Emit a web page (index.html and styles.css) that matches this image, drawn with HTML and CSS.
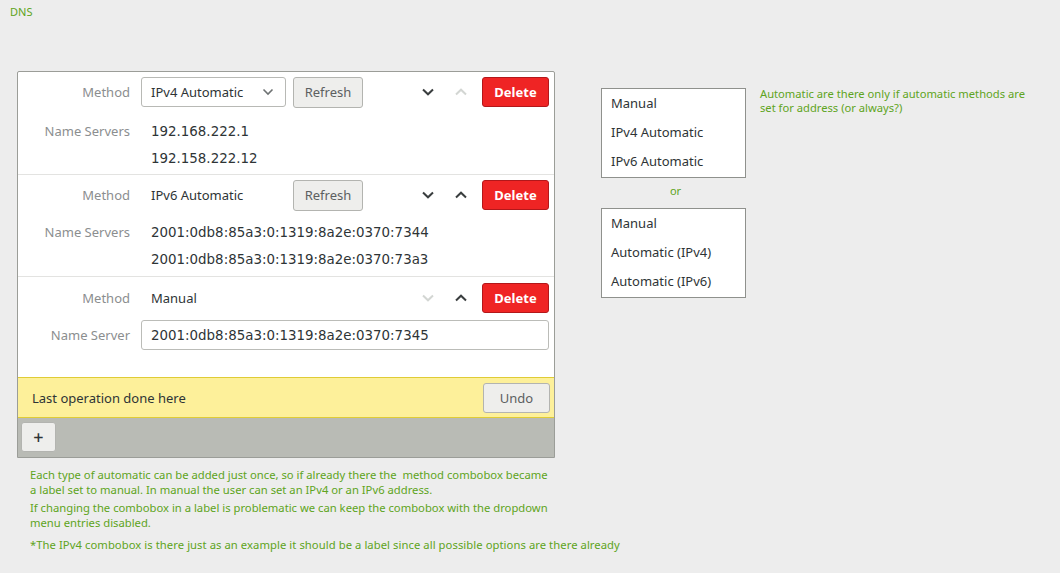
FILE: index.html
```html
<!DOCTYPE html>
<html>
<head>
<meta charset="utf-8">
<link rel="stylesheet" href="styles.css">
</head>
<body>
<div class="page">
  <div class="title">DNS</div>
  <div class="main">
    <div class="left">
      <div class="panel">
        <div class="section first">
          <div class="row head">
            <div class="label">Method</div>
            <div class="combo">IPv4 Automatic
              <svg class="combo-arrow" width="12" height="8" viewBox="0 0 12 8"><path d="M1.5 1.5 L6 6 L10.5 1.5" fill="none" stroke="#6e7273" stroke-width="1.6"/></svg>
            </div>
            <button class="btn refresh">Refresh</button>
            <div class="spacer"></div>
            <span class="arrow"><svg width="12" height="8" viewBox="0 0 12 8"><path d="M1 1.5 L6 6.3 L11 1.5" fill="none" stroke="#3a3e3f" stroke-width="2"/></svg></span>
            <span class="arrow"><svg width="12" height="8" viewBox="0 0 12 8"><path d="M1 6.5 L6 1.7 L11 6.5" fill="none" stroke="#d3d6d3" stroke-width="2"/></svg></span>
            <button class="delete">Delete</button>
          </div>
          <div class="row list">
            <div class="label">Name Servers</div>
            <div class="values"><div>192.168.222.1</div><div>192.158.222.12</div></div>
          </div>
        </div>
        <div class="section second">
          <div class="row head">
            <div class="label">Method</div>
            <div class="plain">IPv6 Automatic</div>
            <button class="btn refresh">Refresh</button>
            <div class="spacer"></div>
            <span class="arrow"><svg width="12" height="8" viewBox="0 0 12 8"><path d="M1 1.5 L6 6.3 L11 1.5" fill="none" stroke="#3a3e3f" stroke-width="2"/></svg></span>
            <span class="arrow"><svg width="12" height="8" viewBox="0 0 12 8"><path d="M1 6.5 L6 1.7 L11 6.5" fill="none" stroke="#3a3e3f" stroke-width="2"/></svg></span>
            <button class="delete">Delete</button>
          </div>
          <div class="row list">
            <div class="label">Name Servers</div>
            <div class="values"><div>2001:0db8:85a3:0:1319:8a2e:0370:7344</div><div>2001:0db8:85a3:0:1319:8a2e:0370:73a3</div></div>
          </div>
        </div>
        <div class="section last">
          <div class="row head">
            <div class="label">Method</div>
            <div class="plain">Manual</div>
            <div class="spacer"></div>
            <span class="arrow"><svg width="12" height="8" viewBox="0 0 12 8"><path d="M1 1.5 L6 6.3 L11 1.5" fill="none" stroke="#d3d6d3" stroke-width="2"/></svg></span>
            <span class="arrow"><svg width="12" height="8" viewBox="0 0 12 8"><path d="M1 6.5 L6 1.7 L11 6.5" fill="none" stroke="#3a3e3f" stroke-width="2"/></svg></span>
            <button class="delete">Delete</button>
          </div>
          <div class="row entry-row">
            <div class="label">Name Server</div>
            <div class="entry"><span class="addr">2001:0db8:85a3:0:1319:8a2e:0370:7345</span></div>
          </div>
        </div>
        <div class="infobar">
          <span>Last operation done here</span>
          <button class="btn undo">Undo</button>
        </div>
        <div class="toolbar">
          <button class="btn add">+</button>
        </div>
      </div>
      <div class="notes">
        <p>Each type of automatic can be added just once, so if already there the&nbsp; method combobox became<br>a label set to manual. In manual the user can set an IPv4 or an IPv6 address.</p>
        <p>If changing the combobox in a label is problematic we can keep the combobox with the dropdown<br>menu entries disabled.</p>
        <p class="star">*The IPv4 combobox is there just as an example it should be a label since all possible options are there already</p>
      </div>
    </div>
    <div class="right">
      <div class="options">
        <div class="menu">
          <div>Manual</div>
          <div>IPv4 Automatic</div>
          <div>IPv6 Automatic</div>
        </div>
        <div class="or">or</div>
        <div class="menu">
          <div>Manual</div>
          <div>Automatic (IPv4)</div>
          <div>Automatic (IPv6)</div>
        </div>
      </div>
      <div class="side-note">Automatic are there only if automatic methods are set for address (or always?)</div>
    </div>
  </div>
</div>
</body>
</html>
```

FILE: styles.css
```css
* { box-sizing: border-box; }
html, body { margin: 0; padding: 0; }
body {
  background: #ededed;
  font-family: "Noto Sans", "DejaVu Sans", sans-serif;
  font-size: 13px;
  color: #2e3436;
  width: 1060px;
  height: 573px;
  overflow: hidden;
}
.page { padding: 4px 0 0 0; }
.title {
  color: #5ea421;
  font-size: 11px;
  line-height: 15px;
  padding-left: 10px;
}
.main {
  display: flex;
  align-items: flex-start;
  margin-top: 52px;
  padding-left: 17px;
}
.left { width: 538px; }
.panel {
  background: #fff;
  border: 1px solid #9b9d98;
  border-radius: 2px 2px 0 0;
}
.section {
  padding: 5px 5px 3px 0;
  border-bottom: 1px solid #e3e3e1;
}
.section.first { padding-bottom: 2px; }
.section.first .list { margin-top: 11px; }
.section.second .list { margin-top: 9px; }
.section.last {
  border-bottom: none;
  padding-top: 6px;
  padding-bottom: 27px;
}
.row { display: flex; align-items: center; }
.label {
  width: 112px;
  text-align: right;
  color: #8b8e8f;
  margin-right: 11px;
  flex: none;
}
.head { height: 30px; }
.list { margin-top: 10px; align-items: flex-start; }
.list .label { line-height: 27px; }
.values {
  line-height: 27px;
  padding-left: 10px;
  font-family: "DejaVu Sans", sans-serif;
  font-size: 13.4px;
  color: #2e3436;
}
.addr {
  font-family: "DejaVu Sans", sans-serif;
  font-size: 13.4px;
}
.combo {
  width: 145px;
  height: 30px;
  border: 1px solid #b8b9b5;
  border-radius: 3px;
  padding: 0 10px 0 9px;
  display: flex;
  align-items: center;
  justify-content: space-between;
  background: #fff;
}
.combo-arrow { margin-right: 1px; }
.plain { width: 145px; padding-left: 10px; }
.btn {
  font-family: inherit;
  font-size: 13px;
  background: #eeeeec;
  border: 1px solid #b3b4b0;
  border-radius: 3px;
  color: #5c6061;
  padding: 0;
}
.refresh { width: 70px; height: 31px; margin-left: 7px; }
.spacer { flex: 1; }
.arrow {
  width: 33px;
  display: flex;
  justify-content: center;
  align-items: center;
}
.delete {
  font-family: inherit;
  font-size: 13px;
  font-weight: bold;
  color: #fff;
  background: #ef2424;
  border: 1px solid #b3171a;
  border-radius: 3px;
  width: 67px;
  height: 30px;
  margin-left: 5px;
  padding: 0;
}
.entry-row { margin-top: 7px; }
.entry {
  flex: 1;
  height: 30px;
  border: 1px solid #bbbcb8;
  border-radius: 3px;
  padding-left: 9px;
  display: flex;
  align-items: center;
}
.infobar {
  background: #fdf09a;
  border-top: 1px solid #dfcc36;
  border-bottom: 1px solid #dfcc36;
  height: 41px;
  display: flex;
  align-items: center;
  justify-content: space-between;
  padding: 0 4px 0 14px;
  color: #2e3436;
}
.undo { width: 67px; height: 30px; color: #5c6061; }
.toolbar {
  background: #b9bbb5;
  height: 39px;
  padding: 4px 3px;
}
.add {
  width: 35px;
  height: 30px;
  font-size: 18px;
  line-height: 18px;
  color: #2e3436;
  font-weight: 500;
}
.notes {
  color: #5ea421;
  font-size: 11.25px;
  line-height: 15px;
  padding-left: 13px;
  margin-top: 9px;
  white-space: nowrap;
}
.notes p { margin: 0 0 3px 0; }
.notes p.star { margin-top: 7px; letter-spacing: 0.06px; }
.right {
  display: flex;
  align-items: flex-start;
  margin-left: 46px;
  margin-top: 17px;
}
.options { width: 145px; }
.menu {
  border: 1px solid #8f918d;
  background: #fff;
  padding: 0 0 0 9px;
  line-height: 29px;
  height: 90px;
}
.menu div { height: 29px; }
.or {
  color: #5ea421;
  font-size: 11px;
  text-align: center;
  height: 30px;
  line-height: 26px;
  padding-left: 4px;
}
.side-note {
  color: #5ea421;
  font-size: 11.2px;
  line-height: 14px;
  width: 275px;
  margin-left: 14px;
  margin-top: -1px;
}
```
